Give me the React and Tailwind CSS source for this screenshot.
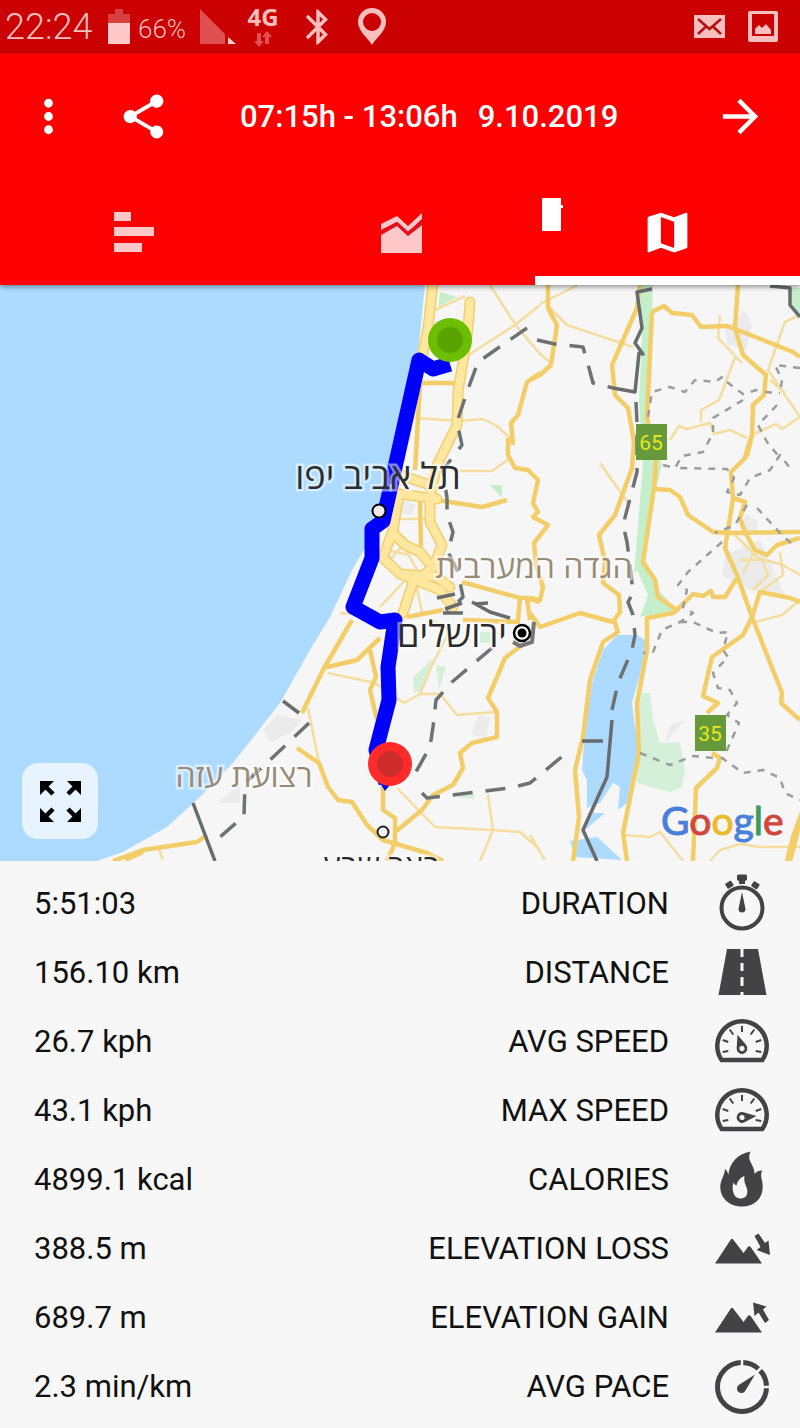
import { MdArrowForward, MdBluetooth, MdMap, MdMoreVert, MdShare } from "react-icons/md";

const INK = "#434345";

function StatusBar() {
    return (
        <div className="h-[53px] bg-[#cb0000] text-[#f9bebe] pl-[5px] pr-[22px] flex items-center justify-between">
            <div className="flex items-center">
                <span className="w-[103px] text-[36px] leading-none font-light">22:24</span>
                <svg width="22" height="36" viewBox="0 0 22 36" aria-label="battery">
                    <path d="M7 0h8v5h7v10H0V5h7z" fill="#d84040" />
                    <path d="M0 14h22v21H0z" fill="#ffc9c9" />
                </svg>
                <span className="w-[70px] pl-2 pt-1 text-[26px] leading-none font-light">66%</span>
                <svg width="36" height="36" viewBox="0 0 36 36" aria-label="signal">
                    <path d="M0 0L25 25V35H0z" fill="#df4f4f" />
                    <path d="M28 28L36 35H28z" fill="#ffd0d0" />
                </svg>
                <div className="ml-3 w-[30px] flex flex-col items-center gap-1">
                    <span className="font-['Open_Sans',sans-serif] font-bold text-2xl leading-[20px]">4G</span>
                    <svg width="18" height="16" viewBox="0 0 18 16" fill="#df5050" aria-hidden="true">
                        <path d="M3 2h4v8h3l-5 6-5-6h3zM11 13V6H8l5-6 5 6h-3v7z" />
                    </svg>
                </div>
                <MdBluetooth className="ml-[19px] size-[42px]" />
                <svg className="ml-[19px]" width="28" height="37" viewBox="0 0 28 37" aria-label="location">
                    <path fillRule="evenodd" fill="currentColor" d="M14 0a14 14 0 0 0-14 14c0 9 9 15 14 23 5-8 14-14 14-23A14 14 0 0 0 14 0zm0 5a9 9 0 1 1 0 18 9 9 0 0 1 0-18z" />
                </svg>
            </div>
            <div className="flex items-center gap-[23px]">
                <svg width="31" height="23" viewBox="0 0 31 23" aria-label="mail">
                    <path d="M0 0h31v23H0z" fill="currentColor" />
                    <path d="M4 4l11.500 10L27 4M4 19l8-7.500M27 19l-8-7.500" fill="none" stroke="#b81010" strokeWidth="2.500" />
                </svg>
                <svg width="30" height="31" viewBox="0 0 30 31" aria-label="image">
                    <path fillRule="evenodd" fill="currentColor" d="M2 0h26a2 2 0 0 1 2 2v27a2 2 0 0 1-2 2H2a2 2 0 0 1-2-2V2a2 2 0 0 1 2-2zM4 3v22h22V3z" />
                    <path fill="currentColor" d="M7 23v-5l4-4 3 3 4-4 5 6v4z" />
                </svg>
            </div>
        </div>
    );
}

function Header() {
    return (
        <header className="relative z-10 bg-[#ff0000] text-white shadow-[0_2px_5px_rgba(0,0,0,0.4)]">
            <div className="h-[126px] pl-[22px] pr-[33px] flex items-center">
                <button aria-label="Menu"><MdMoreVert className="size-[53px]" /></button>
                <button aria-label="Share" className="ml-[42px]"><MdShare className="size-[53px]" /></button>
                <h1 className="ml-[70px] flex gap-5 text-[31px] leading-none font-medium whitespace-nowrap">
                    <span>07:15h - 13:06h</span>
                    <span>9.10.2019</span>
                </h1>
                <button aria-label="Next" className="ml-auto"><MdArrowForward className="size-[53px]" /></button>
            </div>
            <nav className="h-[106px] grid grid-cols-[267fr_268fr_265fr]">
                <button aria-label="Statistics" className="flex items-center justify-center">
                    <svg width="40" height="41" viewBox="0 0 40 41" fill="#ffc8c8">
                        <path d="M0 0h17v9H0zM0 15h40v9H0zM0 31h28v9H0z" />
                    </svg>
                </button>
                <button aria-label="Charts" className="flex items-center justify-center">
                    <svg width="41" height="41" viewBox="0 0 41 41">
                        <path d="M0 23l16-9 11 10L41 13v28H0z" fill="#ffc8c8" />
                        <path d="M0 12l16-8 11 10L41 1v6L27 20 16 10 0 18z" fill="#ffc8c8" />
                        <path d="M0 20l16-8.500 11 10L41 10" fill="none" stroke="#e01020" strokeWidth="3" />
                    </svg>
                </button>
                <button aria-label="Map" className="relative border-b-[9px] border-white flex items-center justify-center pt-[9px]">
                    <MdMap className="size-[53px]" />
                    <span className="absolute left-[7px] top-[19px] h-[33px] w-[19px] bg-white" />
                    <span className="absolute left-[26px] top-[26px] h-[3px] w-[2px] bg-white" />
                </button>
            </nav>
        </header>
    );
}

const highways = [
    "M433 283L428 328 422 358",
    "M470 302L468 328 464 355 458 392 457 425 437 465 430 498 430 522 442 545 433 568 413 582 403 613",
    "M400 475L430 485M393 493L437 499",
    "M398 500L393 530 383 558 400 574 437 577 450 587",
    "M395 535L405 545 420 552 433 568",
    "M400 574L440 590 453 607",
];

const roads = [
    "M540 373L527 382 518 415 511 423 513 445M508 438L508 455 515 468 528 470 538 480 533 503 538 512 533 517 548 525 534 543 536 565 543 587 540 600 530 598",
    "M548 285L548 308 557 325 551 365 540 375 530 380",
    "M640 285L637 308 612 365 615 395 628 408 634 442 632 468 615 515 599 535 605 562 603 583 619 595 620 612 614 620 618 632 603 642 590 680 583 737 575 770 579 817 573 861",
    "M652 312L647 418 656 462 654 488 643 562 655 580 658 597 677 610 673 613 647 618 647 650 637 703 639 753 623 833 627 861",
    "M652 312L664 306 672 313 692 315 701 327 727 326 743 332 793 352 800 357",
    "M738 285L735 328 743 355 766 375 764 395 753 405 752 435 745 458 731 472 733 498 728 530 725 548 737 575 752 617 782 693 781 703 800 720",
    "M752 435L745 458M751 440L747 456",
    "M655 489L670 490 680 497 688 515 713 532 730 533 800 532",
    "M733 498L745 502 740 518 745 532 755 550 767 555 777 545 800 538",
    "M677 610L693 594 703 596 711 591 713 597 725 597 737 578",
    "M800 602L790 598 760 592 752 617 743 635 712 657 703 696 718 703 707 713M712 753L720 758 717 768 696 788 693 861",
    "M804 807L793 837 787 861M802 815L790 861",
    "M530 613L540 627 580 613 613 622",
    "M462 582L520 598 518 620M540 602L527 598 530 620M520 598H527M463 620L520 622M407 617L443 610",
    "M522 645L505 658 488 698 497 712 497 737 472 743 460 753 463 768 453 785 433 795 422 810 395 832",
    "M352 620L323 670 302 713M323 668L357 660 380 638M370 650L376 677 370 690 377 720",
    "M297 748L319 763 328 787 338 800 352 802 367 825 383 840 427 853 443 861",
    "M383 783L383 810 395 818 395 843 387 861",
    "M113 861L143 850 197 842 207 835M125 860L143 852",
    "M422 383H455M420 385L415 470M420 500L421 550M437 500L482 507 507 500",
];

const lanes = [
    "M490 285L517 327 540 354 551 363M540 305L515 325 470 354M435 310L465 296M540 304L578 285M550 308L567 325 633 347",
    "M415 418L460 421 483 419 497 426 512 440M455 471L492 471 509 459",
    "M600 463L628 503M670 440L679 426 687 429 710 423 714 434 730 430 747 438M701 422L701 410 719 400 736 355M720 315L718 338 742 363",
    "M800 315L785 322 768 370 800 417 782 429 776 424 752 435M770 380L785 393",
    "M735 535L758 558 783 565 800 575M755 550L743 573M740 560L762 560 768 575 753 590M780 552L783 575 760 592M755 622L782 615 800 600",
    "M625 835L650 837 660 832 683 861M710 861L720 850 740 844 760 847 800 847M530 835L545 860",
    "M340 613L352 614M328 673L375 683 404 703 420 694 440 694 457 715 495 712M420 694L432 665 450 630 433 620",
    "M308 708L319 763M397 788L435 827 492 830 520 832 540 850M488 795L493 830 480 861M159 850L163 860",
    "M380 607L410 575M415 580L422 612M385 550L410 555M388 562L403 545 417 570M400 519H430M440 470L425 490",
];

const borders = [
    "M527 328L478 362 467 392 457 422 462 445 443 470 447 498 447 515 453 532 448 552 458 572 463 597 447 613",
    "M537 340L555 344 583 347 589 368 593 383 613 388",
    "M636 402L637 422 637 472 623 525 627 542 630 565 633 593 628 602 633 615 635 635 632 650 618 683 612 710",
    "M492 648L452 682 436 700 433 727 430 747 413 777",
    "M422 793L427 798 510 788 530 783 570 750",
    "M309 723L270 760 245 783 244 816 212 844",
];

const solidBorders = [
    "M613 388L635 392 639 353 643 354 635 343 642 328 637 292 652 289",
    "M612 720L607 777 583 830 597 861M582 741H603",
    "M770 286L790 288 790 305 800 317",
    "M283 701L299 713M193 803L215 861",
    "M437 598L455 594M472 602L490 612 510 618M443 613H463M445 609L462 603M475 604L488 603",
];

const trails = [
    "M648 417L652 392 670 387 685 392 695 380 715 382 728 373",
    "M727 382L743 394 763 388M743 400L713 418 713 433 703 452 682 456 675 468 727 469 734 478 727 492 740 495 750 478 770 470 780 455 793 472",
    "M800 368L775 365 782 380 780 393M777 405L758 425 767 442 780 458M663 465L675 468",
    "M757 508L780 533 793 545M747 505L735 525 715 533M722 542L688 572 678 585 687 590 683 607 693 613 680 622 662 630 653 652 643 653",
    "M680 622L693 622 717 633 728 632 723 650 728 657 713 673 718 688 730 690 737 703 727 715 739 723 727 750 722 758 743 773 763 770 780 778 785 793 800 800",
    "M640 753L670 765 693 756 713 758M765 392L780 393",
];

const placeLabels = [
    { text: "תל אביב יפו", x: 378, y: 489, size: "text-[36px]", fill: "#2b2f33" },
    { text: "ירושלים", x: 452, y: 647, size: "text-[36px]", fill: "#2b2b2b" },
    { text: "באר שבע", x: 381, y: 877, size: "text-[32px]", fill: "#2b2b2b" },
    { text: "הגדה המערבית", x: 534, y: 578, size: "text-[32px]", fill: "#978b76" },
    { text: "רצועת עזה", x: 244, y: 787, size: "text-[32px]", fill: "#978b76" },
];

function Lines({ paths, ...props }) {
    return (
        <g fill="none" strokeLinejoin="round" {...props}>
            {paths.map((d) => <path key={d} d={d} />)}
        </g>
    );
}

function RoadSign({ x, y, children }) {
    return (
        <g>
            <rect x={x} y={y} width="31" height="36" fill="#66993c" />
            <text x={x + 15} y={y + 26} textAnchor="middle" fill="#e6e81c" className="text-[21px]">{children}</text>
        </g>
    );
}

function RouteMap() {
    return (
        <section className="relative">
            <svg className="block w-full h-auto" viewBox="0 285 800 576" role="img" aria-label="Route map">
                <path d="M0 285H800V861H0z" fill="#f6f6f6" />
                <path d="M0 285H425L418 353 400 430 385 500 365 548 352 570 330 617 310 650 280 703 233 763 200 797 167 827 123 852 97 861H0z" fill="#addbff" />
                <g fill="#ebebeb">
                    <path d="M277 715L302 720 290 733 270 742 263 730zM240 783L240 803 218 803zM478 715L490 717 486 737 472 735zM745 310L752 325 746 350 728 345 725 330zM725 555L760 540 785 595 750 590 722 575zM665 743L685 720 670 725zM402 500L416 505 412 515 400 513zM745 515L758 520 757 532 742 532z" />
                </g>
                <g fill="#c5efcb">
                    <path d="M640 285H653L652 312 646 418 662 465 655 492 643 562 647 570 655 587 677 610 640 617 648 595 637 570 634 575 640 500 643 465 639 400 642 340z" />
                    <path d="M790 288H800V317L790 305zM440 292L457 297 438 307zM490 485H502V498z" />
                </g>
                <g fill="#d5f0d8">
                    <path d="M640 693H650L653 720 660 743 680 742 685 770 682 787 670 792 637 783z" />
                    <path d="M433 658L413 677 414 692 421 692zM436 665L446 667 439 690zM480 632H492V643H480zM455 797L475 794 474 799z" />
                </g>
                <g fill="#addbff">
                    <path d="M617 635H637L645 640 646 653 632 703 638 750 627 803 618 810 620 787 613 783 600 803 587 808V780L582 770 585 730 592 683 603 650z" />
                    <path d="M593 813H605L585 830zM570 841L597 837 622 860 575 857z" />
                </g>
                <Lines paths={lanes} stroke="#f5dda0" strokeWidth="2.500" />
                <Lines paths={roads} stroke="#f3ce68" strokeWidth="4.500" />
                <Lines paths={highways} stroke="#f1cf70" strokeWidth="11" strokeLinecap="round" />
                <Lines paths={highways} stroke="#ffe79f" strokeWidth="8" strokeLinecap="round" />
                <Lines paths={trails} stroke="#9b9c9e" strokeWidth="2.500" strokeDasharray="7 7" />
                <Lines paths={borders} stroke="#6f7274" strokeWidth="3.500" strokeDasharray="20 13" />
                <Lines paths={solidBorders} stroke="#696c6e" strokeWidth="3.500" />

                <path d="M450 364L433 369 419 360 383 521 372 529V558L353 607 380 622 395 620 388 667 389 700 376 750 386 783" fill="none" stroke="#0000ff" strokeWidth="15" strokeLinejoin="round" />
                <path d="M375 775L385 791 394 780z" fill="#0000ff" />

                {placeLabels.map(({ text, x, y, size, fill }) => (
                    <text
                        key={text}
                        x={x}
                        y={y}
                        fill={fill}
                        direction="rtl"
                        textAnchor="middle"
                        stroke="rgba(255,255,255,0.5)"
                        strokeWidth="5"
                        paintOrder="stroke"
                        className={`${size} font-['Open_Sans','DejaVu_Sans',sans-serif]`}
                    >
                        {text}
                    </text>
                ))}

                <circle cx="379" cy="511" r="6.500" fill="#f1e9f1" stroke="#000" strokeWidth="2" />
                <circle cx="383" cy="832" r="5.500" fill="#f1f1f1" stroke="#222" strokeWidth="2" />
                <path d="M513 642L520 646 532 642 534 622" fill="none" stroke="#777" strokeWidth="4" />
                <circle cx="522" cy="633" r="8" fill="#fff" stroke="#000" strokeWidth="2.500" />
                <circle cx="522" cy="633" r="4.500" fill="#000" />
                <circle cx="450" cy="340" r="22" fill="#6bbf00" />
                <circle cx="450" cy="340" r="13" fill="#5aa300" />
                <circle cx="390" cy="764" r="22" fill="#ff2a2a" />
                <circle cx="390" cy="764" r="13" fill="#cf2c2c" />

                <RoadSign x={636} y={424}>65</RoadSign>
                <RoadSign x={695} y={715}>35</RoadSign>

                <text x="661" y="835" strokeWidth="1" className="text-[39px] font-['Lato',sans-serif]">
                    <tspan fill="#4a80dc" stroke="#4a80dc">G</tspan>
                    <tspan fill="#d0473d" stroke="#d0473d">o</tspan>
                    <tspan fill="#eabb2c" stroke="#eabb2c">o</tspan>
                    <tspan fill="#4a80dc" stroke="#4a80dc">g</tspan>
                    <tspan fill="#3b9c57" stroke="#3b9c57">l</tspan>
                    <tspan fill="#d0473d" stroke="#d0473d">e</tspan>
                </text>
            </svg>
            <button aria-label="Full screen" className="absolute left-[22px] bottom-[22px] size-[76px] rounded-2xl bg-white/70 flex items-center justify-center">
                <svg width="41" height="41" viewBox="0 0 41 41">
                    <path d="M0 0h14L0 14zM41 0v14L27 0zM0 41V27l14 14zM41 41H27l14-14z" />
                    <path d="M4 4l9 9M37 4l-9 9M4 37l9-9M37 37l-9-9" stroke="#000" strokeWidth="4.500" />
                </svg>
            </button>
        </section>
    );
}

function StopwatchIcon() {
    return (
        <>
            <circle cx="28" cy="32" r="20.500" fill="none" stroke={INK} strokeWidth="4" />
            <path d="M23 0q0-1.500 1.500-1.500h7Q33-1.500 33 0v4l-2 1v3h-6V5l-2-1z" />
            <rect x="12" y="6" width="7" height="6" rx="1" transform="rotate(-32 15 9)" />
            <rect x="38" y="6" width="7" height="6" rx="1" transform="rotate(32 41 9)" />
            <path d="M28 16l3.500 17a3.500 3.500 0 0 1-7 0z" />
        </>
    );
}

function RoadIcon() {
    return (
        <path fillRule="evenodd" d="M13 4h31l8.500 46h-48zM26.500 4v8h3V4zM26.500 18v8h3v-8zM26.500 32v9h3v-9zM26.500 47v3h3v-3z" />
    );
}

function GaugeIcon({ angle }) {
    return (
        <>
            <path d="M7.700 46A24.700 24.700 0 1 1 48.300 46z" fill="none" stroke={INK} strokeWidth="4.500" />
            <path d="M28 12v6M15.700 15.500l3.600 5M40.300 15.500l-3.600 5M8.700 26l5.600 2M47.300 26l-5.600 2M8.700 38l5.600-1M47.300 38l-5.600-1" stroke={INK} strokeWidth="2" />
            <g transform={`rotate(${angle} 28 34.500)`}>
                <path d="M28 20l5 12.500a5.400 5.400 0 1 1-10 0z" />
                <circle cx="28" cy="34.500" r="2.600" fill="#f7f7f7" />
            </g>
        </>
    );
}

function FlameIcon() {
    return (
        <path
            fillRule="evenodd"
            d="M36.700-.5C34.500 3 35 7 36.500 10c2 4 4 7 4.200 12 1.500-2.500 4-3.500 7.600-3.500-1.500 3-1.500 5-.8 8 .8 3 1.200 5.500 1.200 8.500C48.700 47 40 54.500 27.700 54.500S6.300 46 6.300 35c0-7 4.200-11 4.700-18 2 1.500 3 3.500 3.300 6C15.500 11 23 2 36.700-.5zM30.300 24c-4 1.500-7 5-7.600 9.500-1.500-.5-2.500-1.500-3.400-3-.8 4-.8 6-.3 8.500.8 5 3.700 7.500 7.700 7.500 4.300 0 7-3 6.600-8-.3-4-3-6.500-3-10.500 0-1.500 0-2.500 0-4z"
        />
    );
}

function MountainIcon({ gain }) {
    return (
        <>
            <path d="M1 42.500L16.500 19q1.500-2.500 3 0L29.500 32l4-5.500q1.500-2.500 3.500 0l11 16z" />
            {gain ? (
                <path d="M39 12.500l13.500 4-3.500 3 6 10.500-4 3-6.500-10.500-4 3.500z" />
            ) : (
                <path d="M40.500 15l4-2.500L51 22l3.500-2.500L56 34l-13.500-5 4-3z" />
            )}
        </>
    );
}

function PaceIcon() {
    return (
        <>
            <circle cx="28" cy="28" r="24.500" fill="none" stroke={INK} strokeWidth="5" />
            <path d="M28 0v8M43 13l6-6M48 28h8" stroke="#f7f7f7" strokeWidth="2.500" />
            <path d="M41 15.500L31.500 31.500a4.500 4.500 0 1 1-6-6z" />
        </>
    );
}

const stats = [
    { value: "5:51:03", label: "DURATION", icon: <StopwatchIcon /> },
    { value: "156.10 km", label: "DISTANCE", icon: <RoadIcon /> },
    { value: "26.7 kph", label: "AVG SPEED", icon: <GaugeIcon angle={-18} /> },
    { value: "43.1 kph", label: "MAX SPEED", icon: <GaugeIcon angle={84} /> },
    { value: "4899.1 kcal", label: "CALORIES", icon: <FlameIcon /> },
    { value: "388.5 m", label: "ELEVATION LOSS", icon: <MountainIcon /> },
    { value: "689.7 m", label: "ELEVATION GAIN", icon: <MountainIcon gain /> },
    { value: "2.3 min/km", label: "AVG PACE", icon: <PaceIcon /> },
];

function StatsTable() {
    return (
        <div className="pt-2 pb-[7px]">
            <table className="w-full text-[31px] leading-none text-[#111]">
                <tbody>
                    {stats.map(({ value, label, icon }) => (
                        <tr key={label} className="h-[69px]">
                            <td className="p-0 pl-[34px]">{value}</td>
                            <th scope="row" className="p-0 pr-[15px] text-right font-normal">{label}</th>
                            <td className="p-0 w-[116px]">
                                <svg className="block mx-auto overflow-visible" width="56" height="56" viewBox="0 0 56 56" fill={INK} aria-hidden="true">
                                    {icon}
                                </svg>
                            </td>
                        </tr>
                    ))}
                </tbody>
            </table>
        </div>
    );
}

export default function App() {
    return (
        <main className="bg-[#f7f7f7] font-['Roboto',sans-serif]">
            <StatusBar />
            <Header />
            <RouteMap />
            <StatsTable />
        </main>
    );
}
